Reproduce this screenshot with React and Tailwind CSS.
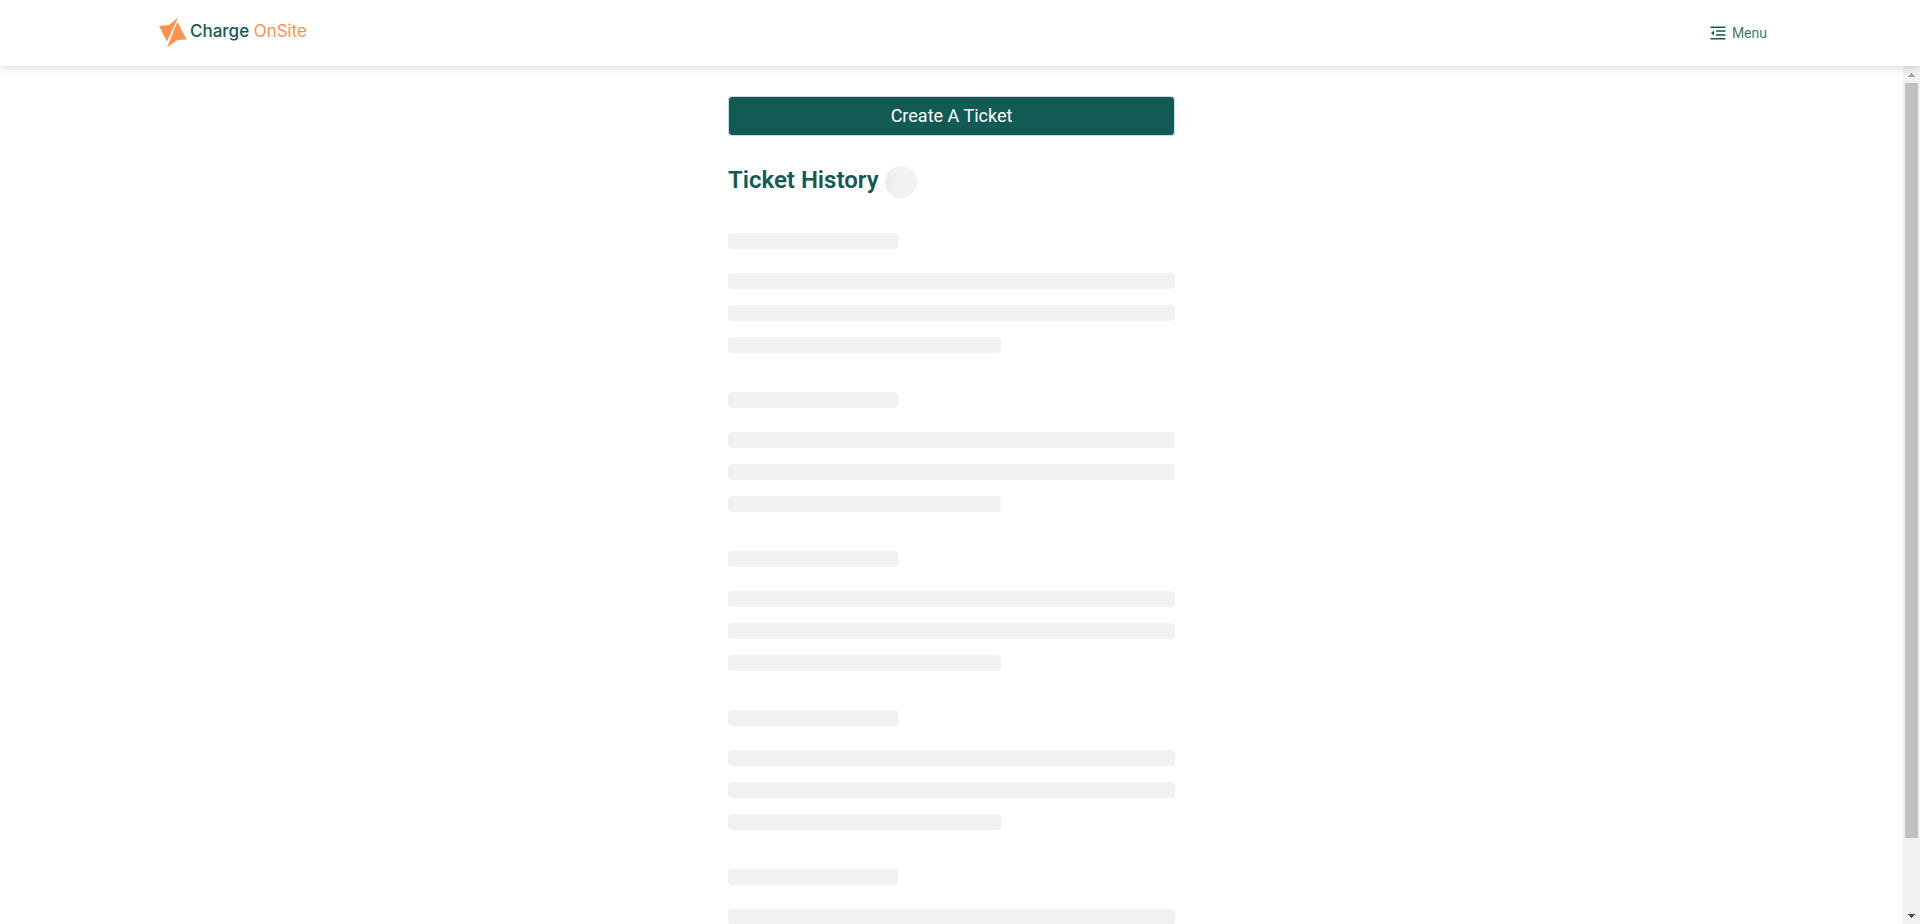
const groups = [1, 2, 3, 4, 5];

function Logo() {
  return (
    <a href="#home" className="flex items-center gap-[3px] pb-[2px] font-['Inter',sans-serif] text-[17px] font-medium text-[#125a54]">
      <svg viewBox="0 0 28 31" className="h-8 w-7" fill="#ff914d" aria-hidden="true">
        <path d="M0 9.5 10 8.5 19.2.8 8 25Z" />
        <path d="M18.4 5.5 27.6 23 18.8 23.4 8.2 30.4Z" />
      </svg>
      <span>
        Charge <span className="font-normal text-[#ff914d]">OnSite</span>
      </span>
    </a>
  );
}

function MenuIcon() {
  return (
    <svg viewBox="0 0 16 14" className="h-[14px] w-4" fill="#125a54" aria-hidden="true">
      <path d="M.5.6h15v1.4H.5zM6 4.3h9.5v1.4H6zM6 8.3h9.5v1.4H6zM.5 12h15v1.4H.5zM1 7l3-2.4v4.8z" />
    </svg>
  );
}

function SkeletonGroup() {
  return (
    <div>
      <div className="h-4 w-[38%] rounded bg-[#f1f1f1]" />
      <div className="mt-6 flex flex-col gap-4">
        <div className="h-4 rounded bg-[#f1f1f1]" />
        <div className="h-4 rounded bg-[#f1f1f1]" />
        <div className="h-4 w-[61%] rounded bg-[#f1f1f1]" />
      </div>
    </div>
  );
}

function ScrollRail() {
  return (
    <div className="flex w-[17px] shrink-0 flex-col bg-[#f1f1f1]" aria-hidden="true">
      <div className="flex h-[17px] shrink-0 items-center justify-center">
        <svg viewBox="0 0 7 4" className="h-1 w-[7px]" fill="#a3a3a3" shapeRendering="crispEdges">
          <path d="M3 0h1v1h1v1h1v1h1v1H0V3h1V2h1V1h1z" />
        </svg>
      </div>
      <div className="min-h-0 grow px-[2px]">
        <div className="h-[91.6%] bg-[#c1c1c1]" />
      </div>
      <div className="flex h-[17px] shrink-0 items-center justify-center">
        <svg viewBox="0 0 7 4" className="h-1 w-[7px]" fill="#505050" shapeRendering="crispEdges">
          <path d="M0 0h7v1H6v1H5v1H4v1H3V3H2V2H1V1H0z" />
        </svg>
      </div>
    </div>
  );
}

export default function App() {
  return (
    <div className="flex h-screen flex-col bg-white font-['Roboto',sans-serif]">
      <header className="z-10 flex h-[66px] shrink-0 items-center justify-between bg-white pr-[153px] pl-[159px] shadow-[0_2px_8px_rgba(0,0,0,0.15)]">
        <Logo />
        <button type="button" className="flex items-center gap-[6px] text-sm text-[#125a54]/85">
          <MenuIcon />
          Menu
        </button>
      </header>
      <div className="flex min-h-0 grow">
        <main className="min-w-0 grow overflow-hidden bg-white">
          <div className="mx-auto w-[447px] max-w-full pt-[30px]">
            <button
              type="button"
              className="h-10 w-full rounded border border-[#d9d9d9] bg-[#125a54] text-lg text-white"
            >
              Create A Ticket
            </button>
            <div className="mt-[30px] flex items-start gap-[6px]">
              <h1 className="text-2xl leading-7 font-semibold text-[#125a54]">Ticket History</h1>
              <div className="size-8 rounded-full bg-linear-to-r from-[#ebebeb] to-[#f2f2f2] to-40%" />
            </div>
            <div className="mt-[35px] flex flex-col gap-[39px]">
              {groups.map((id) => (
                <SkeletonGroup key={id} />
              ))}
            </div>
          </div>
        </main>
        <ScrollRail />
      </div>
    </div>
  );
}
